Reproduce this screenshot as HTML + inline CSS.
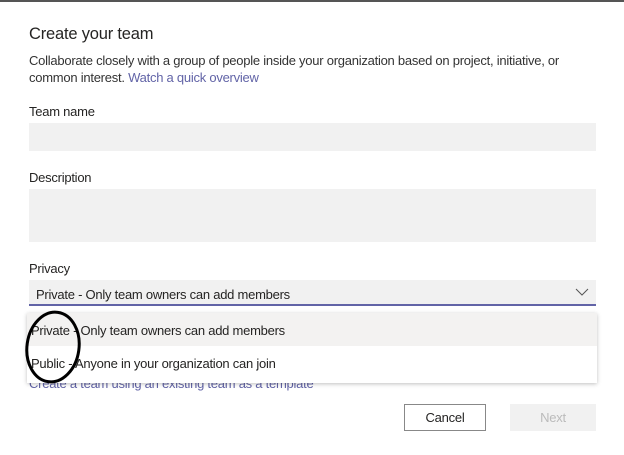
<!DOCTYPE html>
<html><head><style>
body{margin:0;width:624px;height:455px;background:#fff;position:relative;overflow:hidden;font-family:"Liberation Sans",sans-serif;color:#252423}
.a{position:absolute;white-space:nowrap}
.t{font-size:13px;letter-spacing:-0.25px}
.box{position:absolute;background:#f1f1f1}
</style></head><body>
<div class="a" style="left:0;top:0;width:624px;height:2px;background:#555"></div>
<div class="a" style="left:29px;top:25px;font-size:16.5px;letter-spacing:-0.2px">Create your team</div>
<div class="a t" style="left:29px;top:53px;color:#333">Collaborate closely with a group of people inside your organization based on project, initiative, or</div>
<div class="a t" style="left:29px;top:70px;color:#333">common interest. <span style="color:#6264a7">Watch a quick overview</span></div>
<div class="a t" style="left:29px;top:104px">Team name</div>
<div class="box" style="left:29px;top:123px;width:567px;height:28px"></div>
<div class="a t" style="left:29px;top:170px">Description</div>
<div class="box" style="left:29px;top:189px;width:567px;height:53px"></div>
<div class="a t" style="left:29px;top:261px">Privacy</div>
<div class="box" style="left:29px;top:280px;width:567px;height:24px;border-bottom:2px solid #6264a7"></div>
<div class="a t" style="left:36px;top:287px">Private - Only team owners can add members</div>
<svg class="a" style="left:575px;top:288px" width="14" height="9"><path d="M1 1L7 7L13 1" fill="none" stroke="#555" stroke-width="1"/></svg>
<div class="a t" style="left:29px;top:376px;color:#6264a7">Create a team using an existing team as a template</div>
<div class="a" style="left:27px;top:313px;width:570px;height:70px;background:#fff;box-shadow:0 1px 4px rgba(0,0,0,.25)"></div>
<div class="a" style="left:27px;top:313px;width:570px;height:33px;background:#f3f2f1"></div>
<div class="a t" style="left:31px;top:323px">Private - Only team owners can add members</div>
<div class="a t" style="left:31px;top:356px">Public - Anyone in your organization can join</div>
<svg class="a" style="left:20px;top:308px" width="66" height="78"><ellipse cx="33" cy="39" rx="26" ry="35" fill="none" stroke="#000" stroke-width="3" transform="rotate(8 33 39)"/></svg>
<div class="a t" style="left:404px;top:404px;width:80px;height:25px;border:1px solid #888;text-align:center;line-height:25px">Cancel</div>
<div class="a t" style="left:510px;top:404px;width:86px;height:27px;background:#f1f1f1;color:#bbb;text-align:center;line-height:27px">Next</div>
</body></html>
